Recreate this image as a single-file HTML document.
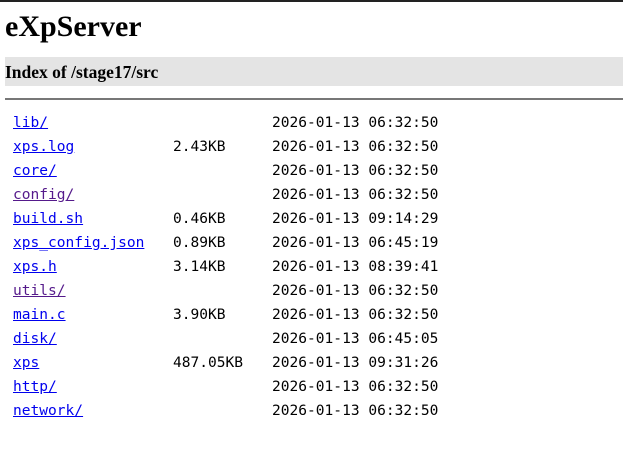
<!DOCTYPE html>
<html><head><meta charset="utf-8"><style>
body{margin:0;width:623px;height:469px;background:#fff;overflow:hidden;position:relative;font-family:"Liberation Serif",serif}
.top{position:absolute;left:0;top:0;width:623px;height:2px;background:#222}
h1{position:absolute;left:5px;top:10px;margin:0;font-size:30px;font-weight:bold;color:#000}
.bar{position:absolute;left:5px;top:57px;width:618px;height:29px;background:#e4e4e4}
.bar span{position:absolute;left:0;top:5px;font-size:17.5px;font-weight:bold}
.hr{position:absolute;left:5px;top:98px;width:618px;height:2px;background:#777}
.r{position:absolute;left:0;font-family:"DejaVu Sans Mono","Liberation Mono",monospace;font-size:14.55px;line-height:18px;white-space:pre}
.r a{position:absolute;left:13px;color:#0000ee;text-decoration:underline}
.r a.v{color:#551a8b}
.r .s{position:absolute;left:173px}
.r .d{position:absolute;left:272px}
</style></head><body>
<div class="top"></div>
<h1>eXpServer</h1>
<div class="bar"><span>Index of /stage17/src</span></div>
<div class="hr"></div>
<div class="r" style="top:114px"><a>lib/</a><span class="d">2026-01-13 06:32:50</span></div>
<div class="r" style="top:138px"><a>xps.log</a><span class="s">2.43KB</span><span class="d">2026-01-13 06:32:50</span></div>
<div class="r" style="top:162px"><a>core/</a><span class="d">2026-01-13 06:32:50</span></div>
<div class="r" style="top:186px"><a class="v">config/</a><span class="d">2026-01-13 06:32:50</span></div>
<div class="r" style="top:210px"><a>build.sh</a><span class="s">0.46KB</span><span class="d">2026-01-13 09:14:29</span></div>
<div class="r" style="top:234px"><a>xps_config.json</a><span class="s">0.89KB</span><span class="d">2026-01-13 06:45:19</span></div>
<div class="r" style="top:258px"><a>xps.h</a><span class="s">3.14KB</span><span class="d">2026-01-13 08:39:41</span></div>
<div class="r" style="top:282px"><a class="v">utils/</a><span class="d">2026-01-13 06:32:50</span></div>
<div class="r" style="top:306px"><a>main.c</a><span class="s">3.90KB</span><span class="d">2026-01-13 06:32:50</span></div>
<div class="r" style="top:330px"><a>disk/</a><span class="d">2026-01-13 06:45:05</span></div>
<div class="r" style="top:354px"><a>xps</a><span class="s">487.05KB</span><span class="d">2026-01-13 09:31:26</span></div>
<div class="r" style="top:378px"><a>http/</a><span class="d">2026-01-13 06:32:50</span></div>
<div class="r" style="top:402px"><a>network/</a><span class="d">2026-01-13 06:32:50</span></div>
</body></html>
